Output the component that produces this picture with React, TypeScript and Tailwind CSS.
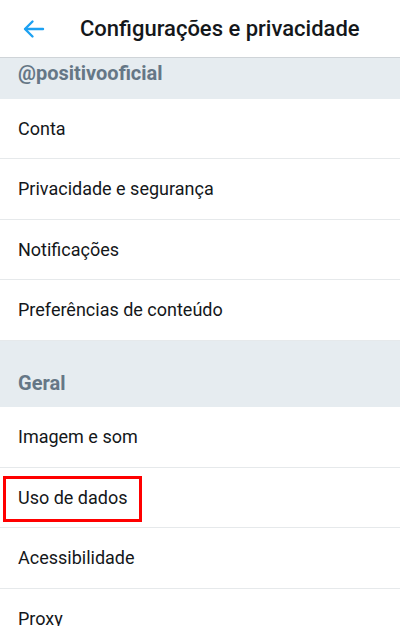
const items1 = ["Conta", "Privacidade e segurança", "Notificações", "Preferências de conteúdo"];

function Row({ label, highlight }: { label: string; highlight?: boolean }) {
  return (
    <div className="relative flex h-[60.5px] items-center border-b border-[#e6e9eb] px-[18px]">
      <span className="text-[18px] text-[#14171a]">{label}</span>
      {highlight && (
        <div className="absolute left-[3px] top-[8px] h-[46px] w-[139px] border-[3px] border-[#ff0000]" />
      )}
    </div>
  );
}

export default function App() {
  return (
    <div className="h-[626px] w-[400px] overflow-hidden bg-white" style={{ fontFamily: "Roboto, 'Noto Sans', sans-serif" }}>
      <div className="flex h-[58px] items-center border-b border-[#cfd4d8] bg-white">
        <div className="flex w-[80px] items-center pl-[22px]">
          <svg width="24" height="24" viewBox="0 0 24 24" fill="none" stroke="#1da1f2" strokeWidth="2.4" strokeLinecap="round" strokeLinejoin="round">
            <path d="M21 12H3.5" />
            <path d="M10.5 4.5L3 12l7.5 7.5" />
          </svg>
        </div>
        <h1 className="text-[22px] font-medium text-[#14171a]">Configurações e privacidade</h1>
      </div>

      <div className="h-[40.5px] bg-[#e6ecf0] px-[18px] pt-[3px]">
        <span className="text-[20px] font-bold leading-[24px] text-[#657786]">@positivooficial</span>
      </div>
      {items1.map((l) => (
        <Row key={l} label={l} />
      ))}

      <div className="h-[66.5px] bg-[#e6ecf0] px-[18px] pt-[30px]">
        <span className="text-[20px] font-bold leading-[24px] text-[#657786]">Geral</span>
      </div>
      <Row label="Imagem e som" />
      <Row label="Uso de dados" highlight />
      <Row label="Acessibilidade" />
      <Row label="Proxy" />
    </div>
  );
}
